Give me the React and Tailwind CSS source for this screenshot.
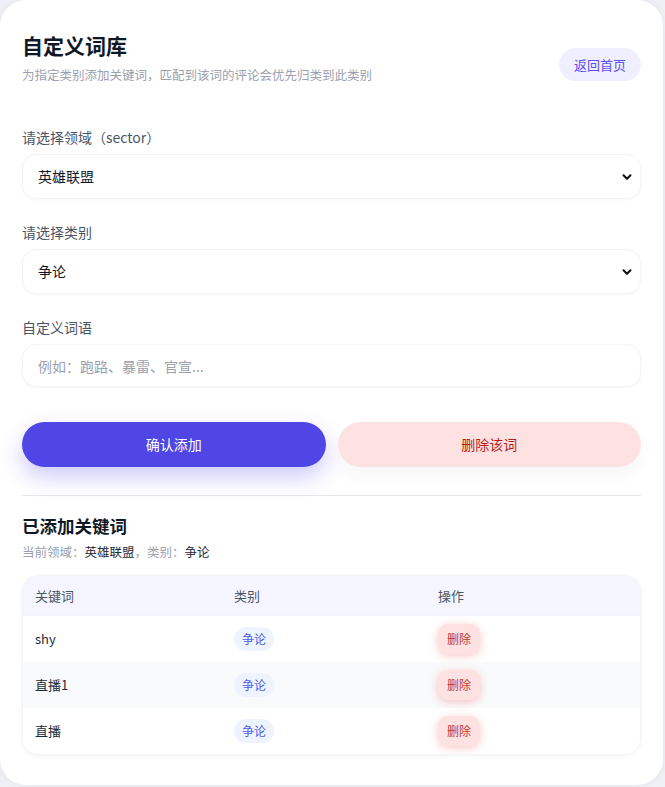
import React, { useState } from 'react';

const rows = [
  { id: 1, word: 'shy', category: '争论' },
  { id: 2, word: '直播1', category: '争论' },
  { id: 3, word: '直播', category: '争论' },
];

const Chevron = () => (
  <svg className="pointer-events-none absolute right-[9px] top-1/2 -translate-y-1/2" width="10" height="10" viewBox="0 0 10 10">
    <path d="M1.5 3.2 L5 6.8 L8.5 3.2" fill="none" stroke="#111" strokeWidth="2" strokeLinecap="round" strokeLinejoin="round" />
  </svg>
);

const SelectField = ({ label, value, options, onChange }) => (
  <div className="mb-[23px]">
    <label className="block text-[14px] text-gray-600 mb-[7px] leading-[20px]">{label}</label>
    <div className="relative">
      <select
        value={value}
        onChange={(e) => onChange(e.target.value)}
        className="w-full h-[45px] appearance-none rounded-[14px] border border-gray-100 bg-white px-[15px] text-[14px] text-gray-900 shadow-[0_1px_3px_rgba(0,0,0,0.04)] outline-none"
      >
        {options.map((o) => (
          <option key={o}>{o}</option>
        ))}
      </select>
      <Chevron />
    </div>
  </div>
);

export default function App() {
  const [sector, setSector] = useState('英雄联盟');
  const [category, setCategory] = useState('争论');
  const [word, setWord] = useState('');

  return (
    <div className="min-h-[787px] bg-[#eef0f6] font-['Noto_Sans_CJK_SC','Noto_Sans',sans-serif]">
      <div className="w-[663px] h-[785px] bg-white rounded-[26px] px-[22px] pt-[29px] shadow-[0_0_6px_rgba(0,0,0,0.05)]">
        {/* header */}
        <div className="flex items-start justify-between">
          <div>
            <h1 className="text-[21px] font-bold text-gray-900 leading-[32px]">自定义词库</h1>
            <p className="mt-[5px] text-[12.5px] text-gray-400 leading-[18px]">为指定类别添加关键词，匹配到该词的评论会优先归类到此类别</p>
          </div>
          <button className="mt-[19px] h-[33px] px-[15px] rounded-full bg-[#f0efff] text-[13px] text-[#5b4ff0]">返回首页</button>
        </div>

        <div className="mt-[43px]">
          <SelectField label="请选择领域（sector）" value={sector} options={['英雄联盟', '王者荣耀']} onChange={setSector} />
          <SelectField label="请选择类别" value={category} options={['争论', '吐槽', '夸赞']} onChange={setCategory} />

          <div>
            <label className="block text-[14px] text-gray-600 mb-[7px] leading-[20px]">自定义词语</label>
            <input
              value={word}
              onChange={(e) => setWord(e.target.value)}
              placeholder="例如：跑路、暴雷、官宣..."
              className="w-full h-[43px] rounded-[14px] border border-gray-100 bg-white px-[15px] text-[14px] text-gray-900 placeholder:text-gray-400 shadow-[0_1px_3px_rgba(0,0,0,0.04)] outline-none"
            />
          </div>

          <div className="mt-[35px] grid grid-cols-2 gap-[12px]">
            <button className="h-[45px] rounded-full bg-[#4f46e5] text-[14px] text-white shadow-[0_10px_22px_rgba(79,70,229,0.28)]">确认添加</button>
            <button className="h-[45px] rounded-full bg-[#fee2e2] text-[14px] text-[#b91c1c] shadow-[0_8px_18px_rgba(0,0,0,0.04)]">删除该词</button>
          </div>
        </div>

        <div className="mt-[28px] border-t border-gray-200" />

        {/* list */}
        <div className="mt-[18px]">
          <h2 className="text-[17.5px] font-bold text-gray-900 leading-[24px]">已添加关键词</h2>
          <p className="mt-[5px] text-[12.5px] text-gray-400 leading-[18px]">
            当前领域：<span className="text-gray-800">{sector}</span>，类别：<span className="text-gray-800">{category}</span>
          </p>

          <div className="mt-[14px] rounded-[16px] border border-gray-100 overflow-hidden shadow-[0_1px_4px_rgba(0,0,0,0.05)]">
            <div className="grid grid-cols-[199px_204px_1fr] h-[40px] items-center bg-[#f5f5ff] border-b border-gray-100 px-[12px] text-[13px] text-gray-600">
              <span>关键词</span>
              <span>类别</span>
              <span>操作</span>
            </div>
            {rows.map((r, i) => (
              <div
                key={r.id}
                className={`grid grid-cols-[199px_204px_1fr] h-[46px] items-center px-[12px] text-[13px] text-gray-800 ${i === 1 ? 'bg-[#f9fafb]' : 'bg-white'}`}
              >
                <span>{r.word}</span>
                <span>
                  <span className="inline-flex h-[24px] items-center rounded-full bg-[#eef4ff] px-[8px] text-[12px] text-[#4f5be6]">{r.category}</span>
                </span>
                <span>
                  <button className="h-[30px] px-[9px] rounded-[10px] bg-[#fee2e2] text-[12px] text-[#c0392b] shadow-[0_2px_8px_rgba(239,68,68,0.3)]">删除</button>
                </span>
              </div>
            ))}
          </div>
        </div>
      </div>
    </div>
  );
}
